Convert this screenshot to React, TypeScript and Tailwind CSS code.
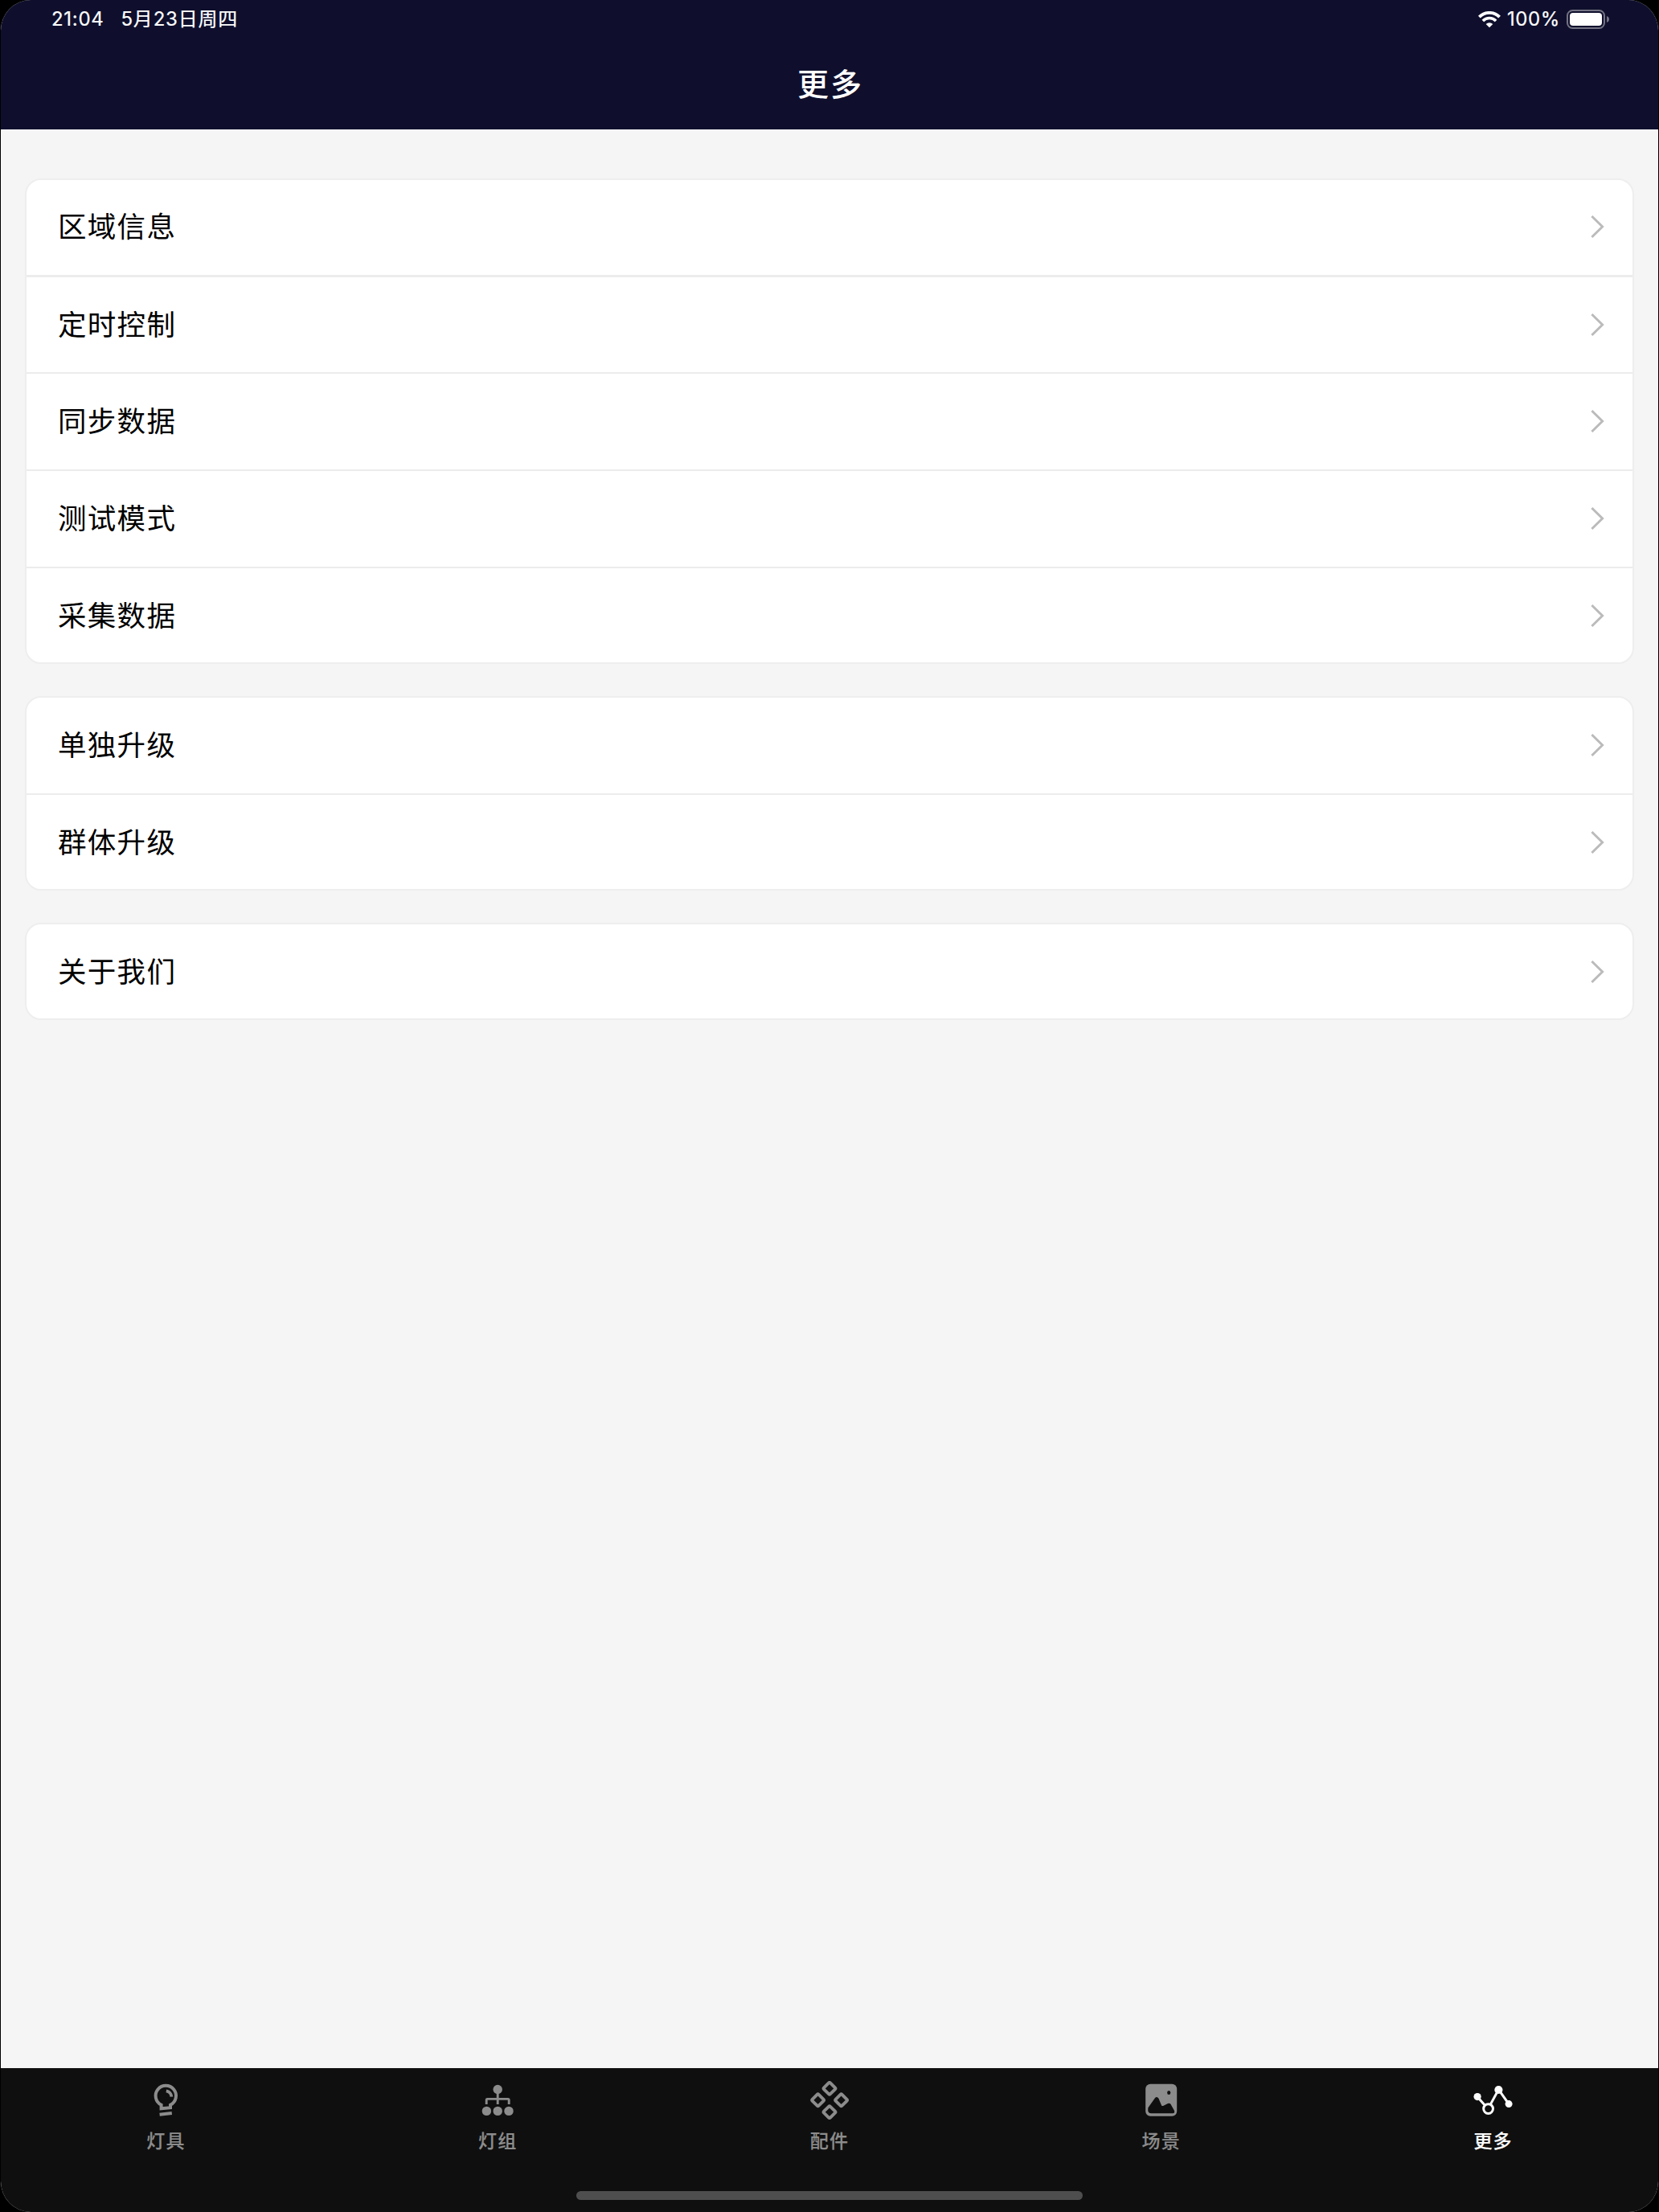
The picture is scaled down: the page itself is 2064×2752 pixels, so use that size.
import type { ReactNode } from 'react';
import clsx from 'clsx';

interface Tab {
  label: string;
  icon: ReactNode;
  active?: boolean;
}

const menuGroups: string[][] = [
  ['区域信息', '定时控制', '同步数据', '测试模式', '采集数据'],
  ['单独升级', '群体升级'],
  ['关于我们'],
];

const LampIcon = () => (
  <svg width="48" height="48" viewBox="0 0 48 48" fill="none" stroke="currentColor" strokeWidth="4">
    <path d="M18.6 34.2V29.8A12.7 12.7 0 1 1 30 29.8V33.2L18.6 34.2Z" />
    <path d="M24.8 12.4A8 8 0 0 1 31.4 19.6" strokeWidth="3.8" />
    <path d="M16.6 41.8L31.8 40" />
  </svg>
);

const GroupIcon = () => (
  <svg width="48" height="48" viewBox="0 0 48 48" fill="currentColor">
    <circle cx="24.2" cy="10.5" r="5.7" />
    <circle cx="10.4" cy="37.4" r="5.7" />
    <circle cx="24.2" cy="37.4" r="5.7" />
    <circle cx="38" cy="37.4" r="5.7" />
    <path
      d="M24.2 14V29M10.2 29V23.5Q10.2 22.4 11.3 22.4H37Q38.2 22.4 38.2 23.5V29"
      fill="none"
      stroke="currentColor"
      strokeWidth="2.9"
    />
  </svg>
);

const PartsIcon = () => (
  <svg width="48" height="48" viewBox="0 0 48 48" fill="none" stroke="currentColor" strokeWidth="3.9">
    <rect x="18.4" y="3.7" width="11.2" height="11.2" rx="1.4" transform="rotate(45 24 9.3)" />
    <rect x="4" y="18.2" width="11.2" height="11.2" rx="1.4" transform="rotate(45 9.6 23.8)" />
    <rect x="33" y="18.2" width="11.2" height="11.2" rx="1.4" transform="rotate(45 38.6 23.8)" />
    <rect x="18.4" y="33.1" width="11.2" height="11.2" rx="1.4" transform="rotate(45 24 38.7)" />
  </svg>
);

const SceneIcon = () => (
  <svg width="48" height="48" viewBox="0 0 48 48">
    <rect x="4.2" y="3.8" width="39" height="40" rx="6" fill="currentColor" />
    <ellipse cx="33.2" cy="14.4" rx="2.1" ry="2.5" fill="#0f0f0f" />
    <path
      d="M7.4 33.2L15.9 21.2Q18.3 18.8 20.5 21.7L24 30.2Q24.6 31.4 26 31L32 28Q34.2 27 35.4 28.8L39.8 36.6Q41.2 40.2 38 40.3H11.5Q7.2 40.3 7.2 36Z"
      fill="#0f0f0f"
    />
  </svg>
);

const MoreIcon = () => (
  <svg width="48" height="48" viewBox="0 0 48 48" fill="currentColor" className="overflow-visible">
    <path d="M4.1 19.7L13.6 30.4M20.2 29.4L30.4 10.7L43.1 28.7" fill="none" stroke="currentColor" strokeWidth="3" />
    <circle cx="4.1" cy="19.6" r="4.6" />
    <circle cx="30.4" cy="11" r="5.1" />
    <circle cx="43.1" cy="28.6" r="4.5" />
    <circle cx="17.6" cy="34.6" r="5.9" fill="none" stroke="currentColor" strokeWidth="3" />
  </svg>
);

const WifiIcon = () => (
  <svg width="28" height="21" viewBox="0 0 28 21" fill="none" stroke="currentColor">
    <path d="M1.4 7.2A17.6 17.6 0 0 1 26.6 7.2" strokeWidth="3.9" />
    <path d="M5.9 11.9A11.3 11.3 0 0 1 22.1 11.9" strokeWidth="3.6" />
    <path d="M14 20.3L9.7 16A6.1 6.1 0 0 1 18.3 16Z" fill="currentColor" stroke="none" />
  </svg>
);

const BatteryIcon = () => (
  <svg width="54" height="24" viewBox="0 0 54 24">
    <rect x="1" y="1" width="46" height="22" rx="6.5" fill="none" stroke="#737384" strokeWidth="2" />
    <rect x="4" y="4" width="40" height="16" rx="4" fill="white" />
    <path d="M50 8C54 9.2 54 14.8 50 16Z" fill="#737384" />
  </svg>
);

const Chevron = () => (
  <svg width="18" height="30" viewBox="0 0 18 30" fill="none" stroke="#bbbbbb" strokeWidth="3">
    <path d="M1.4 2L14.6 15L1.4 28" />
  </svg>
);

const tabs: Tab[] = [
  { label: '灯具', icon: <LampIcon /> },
  { label: '灯组', icon: <GroupIcon /> },
  { label: '配件', icon: <PartsIcon /> },
  { label: '场景', icon: <SceneIcon /> },
  { label: '更多', icon: <MoreIcon />, active: true },
];

function rowStyle(i: number, count: number) {
  if (i === count - 1) return 'h-[117px]';
  if (i === 0 && count > 2) return 'h-[121px] border-b-3 pb-[2px]';
  if (i === 1) return 'h-[120px] border-b-2 pb-px';
  return 'h-[121px] border-b-2 pb-[2px]';
}

function MenuGroup({ items }: { items: string[] }) {
  return (
    <div className="overflow-hidden rounded-[20px] border-2 border-[#eeeeee] bg-white">
      {items.map((item, i) => (
        <div
          key={item}
          className={clsx(
            'flex items-center justify-between border-[#ececec] pr-[34px] pl-[39px]',
            rowStyle(i, items.length),
          )}
        >
          <span className="pt-[2px] text-[35.5px] leading-[50px] tracking-[1.3px] text-black">{item}</span>
          <Chevron />
        </div>
      ))}
    </div>
  );
}

export default function App() {
  return (
    <div className="h-[2752px] w-[2064px] bg-black font-['Inter','Noto_Sans_CJK_SC',sans-serif]">
      <div className="flex h-full flex-col overflow-hidden rounded-[38px] border-x border-black bg-[#f5f5f5]">
        {/* Header */}
        <header className="h-[161px] shrink-0 bg-[#0f0f2d] text-white">
          <div className="flex h-[48px] items-center justify-between pr-[60px] pl-[63px] text-[24px] [-webkit-text-stroke:0.2px]">
            <div className="flex items-center gap-[21px]">
              <span className="tracking-[0.7px]">21:04</span>
              <span className="tracking-[0.8px]">5月23日周四</span>
            </div>
            <div className="flex items-center">
              <WifiIcon />
              <span className="mr-[8px] ml-[8px] tracking-[0.6px]">100%</span>
              <BatteryIcon />
            </div>
          </div>
          <h1 className="flex h-[113px] items-center justify-center pt-[2px] pl-[2px] text-[39px] font-medium tracking-[2px]">
            更多
          </h1>
        </header>

        {/* Menu */}
        <main className="flex flex-1 flex-col gap-[40px] px-[30px] pt-[61px]">
          {menuGroups.map((items) => (
            <MenuGroup key={items[0]} items={items} />
          ))}
        </main>

        {/* Tab bar */}
        <footer className="-mx-px flex h-[179px] shrink-0 flex-col items-center bg-[#0f0f0f]">
          <nav className="grid w-full flex-1 grid-cols-5">
            {tabs.map((tab) => (
              <div
                key={tab.label}
                className={clsx('flex flex-col items-center pt-[16px]', tab.active ? 'text-white' : 'text-[#8c8c8c]')}
              >
                {tab.icon}
                <span className="mt-[10px] text-[23px] leading-[34px] font-medium tracking-[1.2px] [-webkit-text-stroke:0.2px]">
                  {tab.label}
                </span>
              </div>
            ))}
          </nav>
          <div className="mb-[15px] h-[11px] w-[630px] rounded-full bg-[#4e4e4e]" />
        </footer>
      </div>
    </div>
  );
}
